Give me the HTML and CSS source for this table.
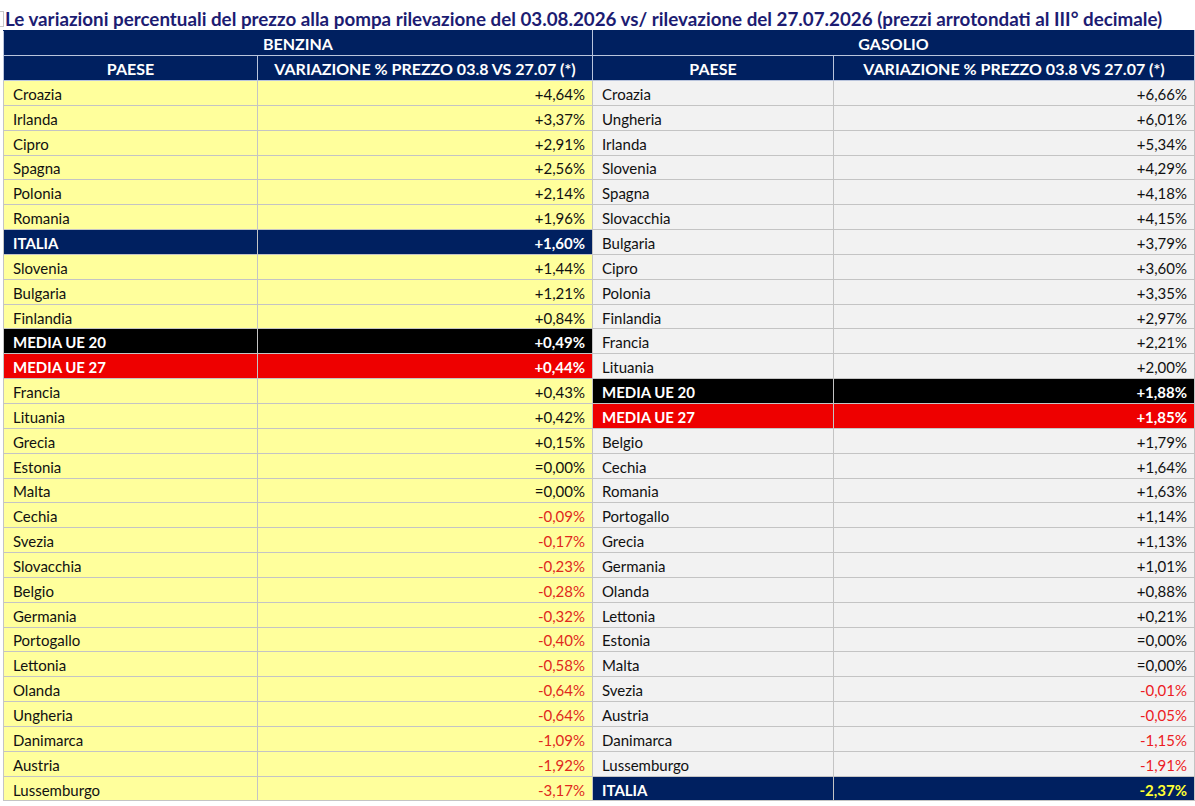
FILE: index.html
```html
<!DOCTYPE html>
<html lang="it">
<head>
<meta charset="utf-8">
<title>Variazioni prezzi carburanti</title>
<link rel="stylesheet" href="styles.css">
</head>
<body>
<div class="sheet">
  <h1 class="title"><span class="cellmark"></span>Le variazioni percentuali del prezzo alla pompa rilevazione del 03.08.2026 vs/ rilevazione del 27.07.2026 (prezzi arrotondati al III° decimale)</h1>
  <table class="grid">
    <colgroup>
      <col class="c-paese-l"><col class="c-var-l"><col class="c-paese-r"><col class="c-var-r">
    </colgroup>
    <thead>
      <tr class="hrow"><th colspan="2">BENZINA</th><th colspan="2">GASOLIO</th></tr>
      <tr class="hrow hbold"><th>PAESE</th><th>VARIAZIONE % PREZZO 03.8 VS 27.07 (*)</th><th>PAESE</th><th>VARIAZIONE % PREZZO 03.8 VS 27.07 (*)</th></tr>
    </thead>
    <tbody>
      <tr><td class="y">Croazia</td><td class="y v">+4,64%</td><td class="g">Croazia</td><td class="g v">+6,66%</td></tr>
      <tr><td class="y">Irlanda</td><td class="y v">+3,37%</td><td class="g">Ungheria</td><td class="g v">+6,01%</td></tr>
      <tr><td class="y">Cipro</td><td class="y v">+2,91%</td><td class="g">Irlanda</td><td class="g v">+5,34%</td></tr>
      <tr><td class="y">Spagna</td><td class="y v">+2,56%</td><td class="g">Slovenia</td><td class="g v">+4,29%</td></tr>
      <tr><td class="y">Polonia</td><td class="y v">+2,14%</td><td class="g">Spagna</td><td class="g v">+4,18%</td></tr>
      <tr><td class="y">Romania</td><td class="y v">+1,96%</td><td class="g">Slovacchia</td><td class="g v">+4,15%</td></tr>
      <tr><td class="nv">ITALIA</td><td class="nv v">+1,60%</td><td class="g">Bulgaria</td><td class="g v">+3,79%</td></tr>
      <tr><td class="y">Slovenia</td><td class="y v">+1,44%</td><td class="g">Cipro</td><td class="g v">+3,60%</td></tr>
      <tr><td class="y">Bulgaria</td><td class="y v">+1,21%</td><td class="g">Polonia</td><td class="g v">+3,35%</td></tr>
      <tr><td class="y">Finlandia</td><td class="y v">+0,84%</td><td class="g">Finlandia</td><td class="g v">+2,97%</td></tr>
      <tr><td class="bk">MEDIA UE 20</td><td class="bk v">+0,49%</td><td class="g">Francia</td><td class="g v">+2,21%</td></tr>
      <tr><td class="rd">MEDIA UE 27</td><td class="rd v">+0,44%</td><td class="g">Lituania</td><td class="g v">+2,00%</td></tr>
      <tr><td class="y">Francia</td><td class="y v">+0,43%</td><td class="bk">MEDIA UE 20</td><td class="bk v">+1,88%</td></tr>
      <tr><td class="y">Lituania</td><td class="y v">+0,42%</td><td class="rd">MEDIA UE 27</td><td class="rd v">+1,85%</td></tr>
      <tr><td class="y">Grecia</td><td class="y v">+0,15%</td><td class="g">Belgio</td><td class="g v">+1,79%</td></tr>
      <tr><td class="y dash">Estonia</td><td class="y v dash">=0,00%</td><td class="g">Cechia</td><td class="g v">+1,64%</td></tr>
      <tr><td class="y">Malta</td><td class="y v">=0,00%</td><td class="g">Romania</td><td class="g v">+1,63%</td></tr>
      <tr><td class="y">Cechia</td><td class="y v neg">-0,09%</td><td class="g">Portogallo</td><td class="g v">+1,14%</td></tr>
      <tr><td class="y">Svezia</td><td class="y v neg">-0,17%</td><td class="g">Grecia</td><td class="g v">+1,13%</td></tr>
      <tr><td class="y">Slovacchia</td><td class="y v neg">-0,23%</td><td class="g">Germania</td><td class="g v">+1,01%</td></tr>
      <tr><td class="y">Belgio</td><td class="y v neg">-0,28%</td><td class="g">Olanda</td><td class="g v">+0,88%</td></tr>
      <tr><td class="y">Germania</td><td class="y v neg">-0,32%</td><td class="g">Lettonia</td><td class="g v">+0,21%</td></tr>
      <tr><td class="y">Portogallo</td><td class="y v neg">-0,40%</td><td class="g dash">Estonia</td><td class="g v dash">=0,00%</td></tr>
      <tr><td class="y">Lettonia</td><td class="y v neg">-0,58%</td><td class="g">Malta</td><td class="g v">=0,00%</td></tr>
      <tr><td class="y dash">Olanda</td><td class="y v neg dash">-0,64%</td><td class="g">Svezia</td><td class="g v neg">-0,01%</td></tr>
      <tr><td class="y">Ungheria</td><td class="y v neg">-0,64%</td><td class="g">Austria</td><td class="g v neg">-0,05%</td></tr>
      <tr><td class="y">Danimarca</td><td class="y v neg">-1,09%</td><td class="g">Danimarca</td><td class="g v neg">-1,15%</td></tr>
      <tr><td class="y">Austria</td><td class="y v neg">-1,92%</td><td class="g">Lussemburgo</td><td class="g v neg">-1,91%</td></tr>
      <tr><td class="y">Lussemburgo</td><td class="y v neg">-3,17%</td><td class="nv">ITALIA</td><td class="nv v hl">-2,37%</td></tr>
    </tbody>
  </table>
</div>
</body>
</html>
```

FILE: styles.css
```css
html, body {
  margin: 0;
  padding: 0;
  background: #ffffff;
}

.sheet {
  font-family: Lato, "Open Sans", "Liberation Sans", sans-serif;
  padding: 7px 0 0 0;
}

.title {
  margin: 0;
  height: 23px;
  font-size: 18.8px;
  line-height: 22px;
  font-weight: 700;
  color: #1c1c72;
  white-space: nowrap;
  display: flex;
  align-items: center;
}

.cellmark {
  display: inline-block;
  width: 3px;
  height: 14px;
  border: 1px solid #c8c8c8;
  border-left: none;
  margin-right: 1px;
}

.grid {
  border-collapse: collapse;
  table-layout: fixed;
  width: 1191px;
  margin-left: 3px;
  font-size: 15px;
}

.c-paese-l { width: 254px; }
.c-var-l { width: 335px; }
.c-paese-r { width: 241px; }
.c-var-r { width: 361px; }

.hrow th {
  background: #002060;
  color: #ffffff;
  font-weight: 700;
  font-size: 16px;
  height: 24px;
  padding: 0;
  text-align: center;
  border: 1px solid #b9c4dc;
  border-top-color: #002060;
}

tbody td {
  height: 21.85px;
  padding: 2px 7px 0 9px;
  border: 1px solid #c4c4c4;
  color: #111111;
  white-space: nowrap;
  overflow: hidden;
}

td.v { text-align: right; }

td.y { background: #ffff9c; }
td.g { background: #f2f2f2; }

td.nv {
  background: #002060;
  color: #ffffff;
  font-weight: 700;
}

td.bk {
  background: #000000;
  color: #ffffff;
  font-weight: 700;
}

td.rd {
  background: #ee0000;
  color: #ffffff;
  font-weight: 700;
}

td.neg { color: #e0291c; }
td.g.neg { color: #ec1c24; }

td.hl { color: #ffff33; }

td.dash { border-bottom: 1px dashed #8a8a8a; }
```
